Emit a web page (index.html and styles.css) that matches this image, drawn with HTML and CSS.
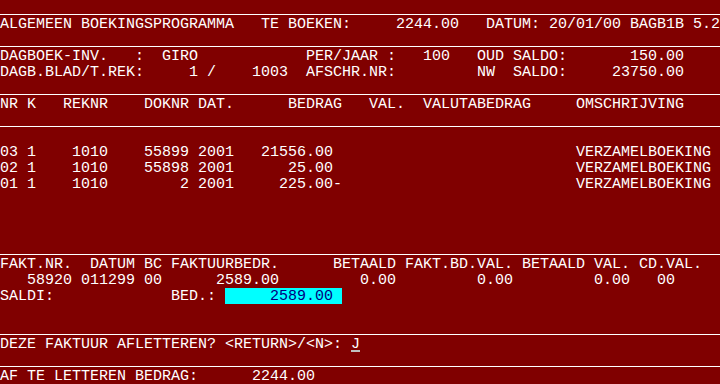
FILE: index.html
```html
<!DOCTYPE html>
<html lang="nl">
<head>
  <meta charset="UTF-8">
  <title>Algemeen Boekingsprogramma</title>
  <link rel="stylesheet" href="styles.css">
</head>
<body>
  <div class="screen">
    <div class="row rule"></div>
    <div class="row">ALGEMEEN BOEKINGSPROGRAMMA   TE BOEKEN:     2244.00   DATUM: 20/01/00 BAGB1B 5.2</div>
    <div class="row rule"></div>
    <div class="row">DAGBOEK-INV.   :  GIRO            PER/JAAR :   100   OUD SALDO:       150.00</div>
    <div class="row">DAGB.BLAD/T.REK:     1 /    1003  AFSCHR.NR:         NW  SALDO:     23750.00</div>
    <div class="row rule"></div>
    <div class="row">NR K   REKNR    DOKNR DAT.      BEDRAG   VAL.  VALUTABEDRAG     OMSCHRIJVING</div>
    <div class="row rule"></div>
    <div class="row"></div>
    <div class="row">03 1    1010    55899 2001   21556.00                           VERZAMELBOEKING</div>
    <div class="row">02 1    1010    55898 2001      25.00                           VERZAMELBOEKING</div>
    <div class="row">01 1    1010        2 2001     225.00-                          VERZAMELBOEKING</div>
    <div class="row"></div>
    <div class="row"></div>
    <div class="row"></div>
    <div class="row rule"></div>
    <div class="row">FAKT.NR.  DATUM BC FAKTUURBEDR.      BETAALD FAKT.BD.VAL. BETAALD VAL. CD.VAL.</div>
    <div class="row">   58920 011299 00      2589.00         0.00         0.00         0.00   00</div>
    <div class="row">SALDI:             BED.: <span class="field">     2589.00 </span></div>
    <div class="row"></div>
    <div class="row rule"></div>
    <div class="row">DEZE FAKTUUR AFLETTEREN? &lt;RETURN&gt;/&lt;N&gt;: <span class="cursor">J</span></div>
    <div class="row rule"></div>
    <div class="row">AF TE LETTEREN BEDRAG:      2244.00</div>
  </div>
</body>
</html>
```

FILE: styles.css
```css
body {
  margin: 0;
  padding: 0;
  background-color: #800000;
  color: #ffffff;
  font-family: 'Liberation Mono', monospace;
  font-size: 15px;
}

.screen {
  width: 720px;
  height: 384px;
  overflow: hidden;
}

.row {
  height: 16px;
  line-height: 18px;
  white-space: pre;
}

.rule {
  height: 14px;
  border-bottom: 1px solid #ffffff;
  margin-bottom: 1px;
}

.field {
  display: inline-block;
  vertical-align: top;
  height: 16px;
  line-height: 18px;
  background-color: #00ffff;
  color: #000080;
}

.cursor {
  display: inline-block;
  vertical-align: top;
  height: 16px;
  line-height: 18px;
  box-shadow: inset 0 -2px #c0c0c0;
}
```
